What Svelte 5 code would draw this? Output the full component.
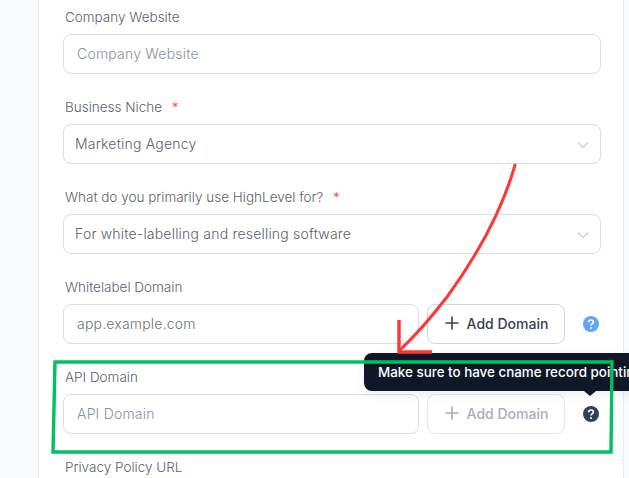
<script lang="ts">
  const tooltip = 'Make sure to have cname record pointing to your server';
</script>

{#snippet plus()}
  <svg class="plus" viewBox="0 0 14 14" width="14" height="14" aria-hidden="true">
    <path d="M7 0.5v13M0.5 7h13" fill="none" stroke="currentColor" stroke-width="1.6" />
  </svg>
{/snippet}

{#snippet chevron()}
  <svg class="chevron" viewBox="0 0 12 8" width="12" height="8" aria-hidden="true">
    <path d="M1 1.5l5 5 5-5" fill="none" stroke="currentColor" stroke-width="1.2" />
  </svg>
{/snippet}

{#snippet help(color: string)}
  <svg class="help" viewBox="0 0 16 16" width="16" height="16" aria-hidden="true">
    <circle cx="8" cy="8" r="8" fill={color} />
    <path d="M5.6 6.2c0-1.4 1-2.2 2.4-2.2s2.4.8 2.4 2c0 1.9-2.4 1.9-2.4 3.6" fill="none" stroke="#fff" stroke-width="1.7" />
    <circle cx="8" cy="12" r="1.05" fill="#fff" />
  </svg>
{/snippet}

<div class="page">
  <main class="card">
    <div class="field">
      <span class="label">Company Website</span>
      <div class="input placeholder">Company Website</div>
    </div>

    <div class="field">
      <span class="label">Business Niche <em>*</em></span>
      <div class="input select">Marketing Agency {@render chevron()}</div>
    </div>

    <div class="field">
      <span class="label">What do you primarily use HighLevel for? <em>*</em></span>
      <div class="input select">For white-labelling and reselling software {@render chevron()}</div>
    </div>

    <div class="field">
      <span class="label">Whitelabel Domain</span>
      <div class="row">
        <div class="input value grow">app.example.com</div>
        <button class="add">{@render plus()} Add Domain</button>
        {@render help('#60a5fa')}
      </div>
    </div>

    <div class="field">
      <span class="label">API Domain</span>
      <div class="row">
        <div class="input placeholder grow">API Domain</div>
        <button class="add disabled">{@render plus()} Add Domain</button>
        <span class="help-wrap">
          {@render help('#344054')}
          <span class="tooltip">{tooltip}</span>
        </span>
      </div>
    </div>

    <div class="field">
      <span class="label">Privacy Policy URL</span>
    </div>
  </main>

  <svg class="annotation" viewBox="0 0 629 478" width="629" height="478" aria-hidden="true">
    <path d="M515 165C504 204 484 246 447 297C430 319 416 335 400 350" fill="none" stroke="#ff3636" stroke-width="3" stroke-linecap="round" />
    <path d="M399 320V352H432" fill="none" stroke="#ff3636" stroke-width="3.4" />
    <path d="M55 362H612L611 452H53Z" fill="none" stroke="#00c061" stroke-width="3.4" />
  </svg>
</div>

<style>
  :global(body) {
    margin: 0;
    overflow: hidden;
    background: #fafbfc;
  }

  .page {
    position: relative;
    width: 629px;
    height: 478px;
    overflow: hidden;
    font-family: Inter, "Liberation Sans", sans-serif;
  }

  .card {
    width: 586px;
    height: 478px;
    margin-left: 38px;
    box-sizing: border-box;
    padding: 6px 24px 0;
    background: #fff;
    border-left: 1px solid #eaecf0;
    border-right: 1px solid #eaecf0;
    display: flex;
    flex-direction: column;
    gap: 22px;
  }

  .field {
    display: flex;
    flex-direction: column;
    gap: 6px;
  }

  .label {
    height: 22px;
    line-height: 22px;
    margin-left: 2px;
    font-size: 13.5px;
    font-weight: 300;
    color: #5b6270;
  }

  .label em {
    margin-left: 6px;
    font-style: normal;
    color: #f04438;
  }

  .input {
    position: relative;
    height: 40px;
    box-sizing: border-box;
    display: flex;
    align-items: center;
    padding: 0 13px 2px;
    width: 538px;
    background: #fff;
    border: 1px solid #dcdee6;
    border-radius: 8px;
    font-size: 14px;
    font-weight: 300;
    letter-spacing: 0.2px;
  }

  .placeholder {
    color: #8a90a2;
  }

  .select {
    padding-left: 11px;
    color: #5b6270;
  }

  .value {
    color: #6b7280;
  }

  .chevron {
    position: absolute;
    right: 11px;
    top: 16px;
    color: #c9ccd4;
  }

  .row {
    display: flex;
    align-items: center;
    gap: 8px;
  }

  .grow {
    width: 356px;
  }

  .add {
    width: 138px;
    height: 40px;
    display: flex;
    align-items: center;
    justify-content: center;
    gap: 8px;
    padding: 0 0 2px 1px;
    background: #fff;
    border: 1px solid #d0d5dd;
    border-radius: 8px;
    font-family: inherit;
    font-size: 14px;
    font-weight: 500;
    color: #344054;
  }

  .add.disabled {
    border-color: #e6e8ed;
    color: #a9adb9;
  }

  .help {
    display: block;
    margin-left: 10px;
  }

  .help-wrap {
    position: relative;
    display: block;
  }

  .tooltip {
    position: absolute;
    left: -209px;
    top: -53px;
    height: 38px;
    box-sizing: border-box;
    padding: 0 14px;
    display: flex;
    align-items: center;
    white-space: nowrap;
    background: #101828;
    border-radius: 8px;
    font-size: 13.4px;
    font-weight: 500;
    color: #fff;
    box-shadow: 0 4px 10px rgba(16, 24, 40, 0.08);
  }

  .tooltip::after {
    content: "";
    position: absolute;
    left: 220px;
    bottom: -5px;
    width: 0;
    height: 0;
    border-left: 6px solid transparent;
    border-right: 6px solid transparent;
    border-top: 5px solid #101828;
  }

  .annotation {
    position: absolute;
    left: 0;
    top: 0;
    pointer-events: none;
  }
</style>
